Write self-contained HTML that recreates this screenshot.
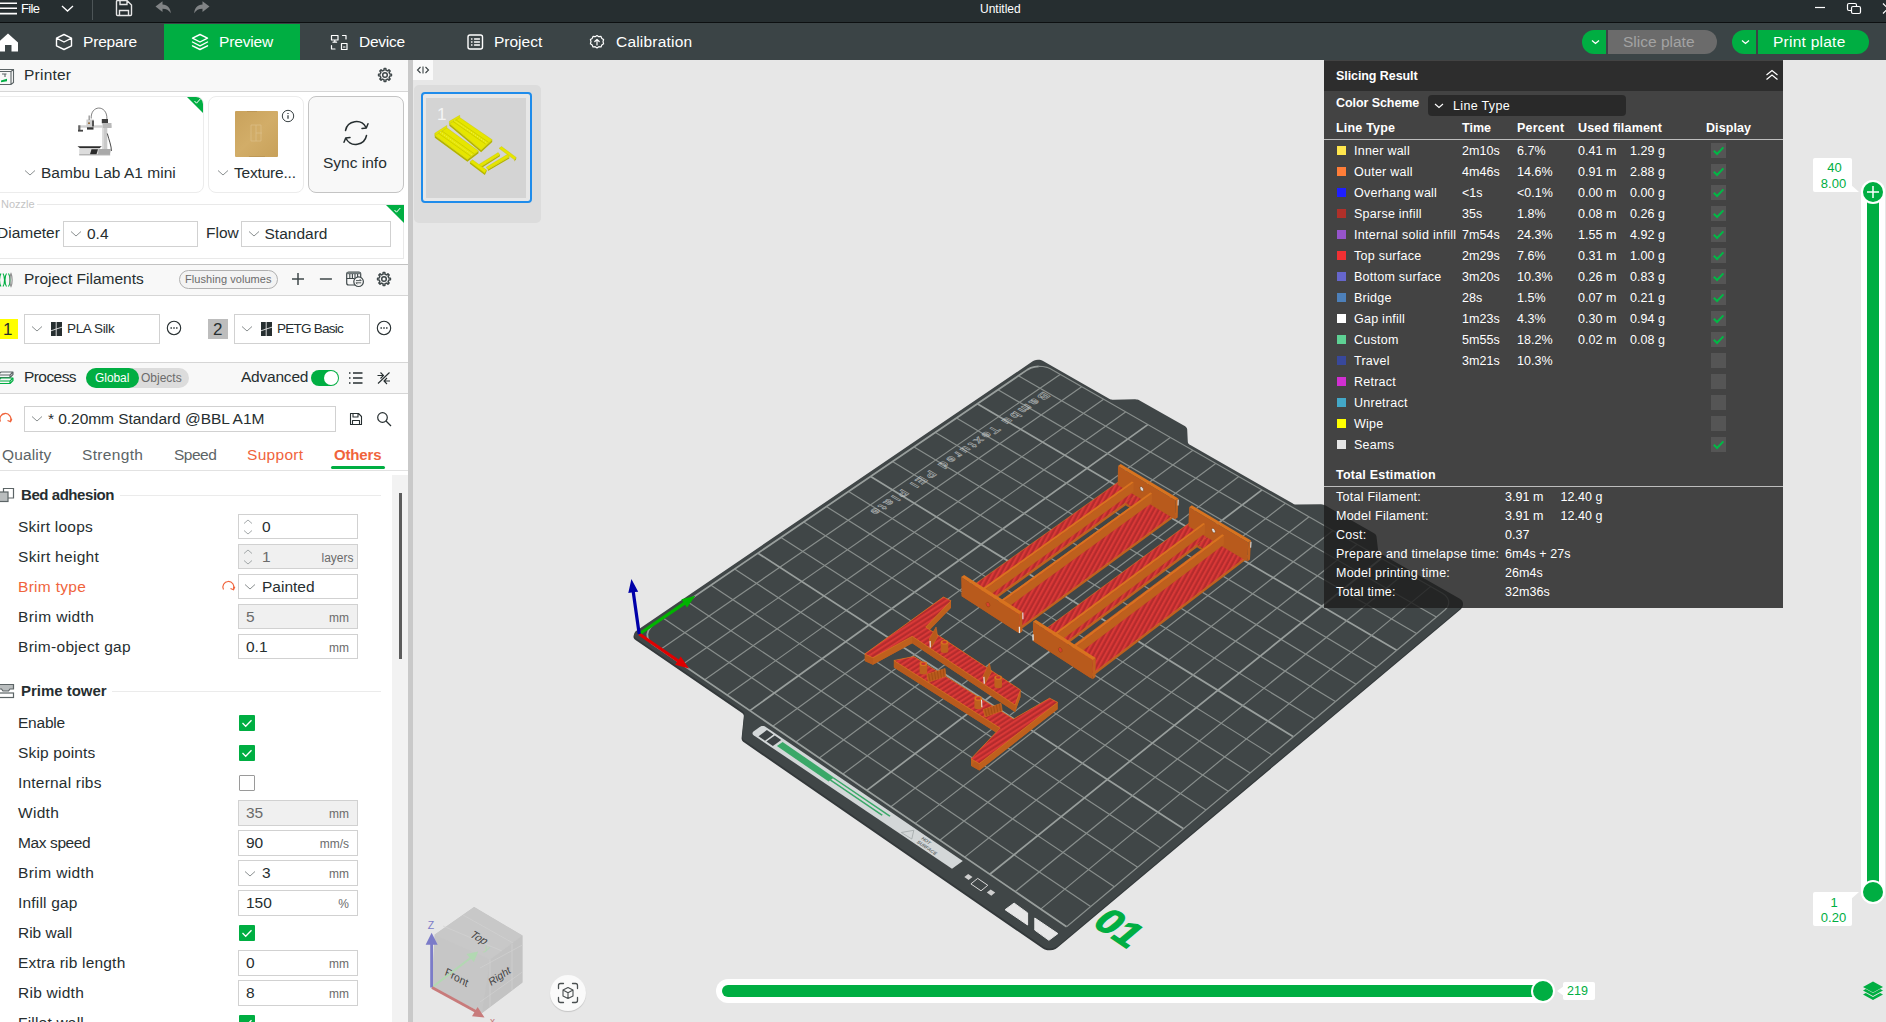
<!DOCTYPE html>
<html lang="en">
<head>
<meta charset="utf-8">
<title>Untitled</title>
<style>
*{box-sizing:border-box;margin:0;padding:0}
html,body{width:1886px;height:1022px;overflow:hidden;background:#e7e7e7;font-family:"Liberation Sans",sans-serif;color:#262e30}
.abs{position:absolute}
#app{position:relative;width:1886px;height:1022px;overflow:hidden}
.t{position:absolute;white-space:nowrap;line-height:1;transform-origin:0 50%}
#titlebar{position:absolute;left:0;top:0;width:1886px;height:24px;background:linear-gradient(to bottom,#262e30 0,#262e30 22.4px,#0d1011 22.4px,#0d1011 23.5px,#3b4446 23.5px)}
#tabbar{position:absolute;left:0;top:24px;width:1886px;height:36px;background:#3b4446}
#left{position:absolute;left:0;top:60px;width:408px;height:962px;background:#fff;overflow:hidden}
#divider{position:absolute;left:408px;top:60px;width:5px;height:962px;background:#c9c9c9}
.hdr{position:absolute;left:0;width:408px;background:#f8f8f8;border-top:1px solid #d6d6d6;border-bottom:1px solid #d6d6d6}
.box{position:absolute;border:1px solid #d1d1d1;background:#fff}
.box.dis{background:#f0f0f0}
.lbl{position:absolute;left:18px;font-size:15.5px;white-space:nowrap;line-height:20px;color:#262e30}
.val{position:absolute;font-size:15.5px;line-height:23px;color:#262e30;white-space:nowrap}
.unit{position:absolute;right:8px;top:0;font-size:12px;line-height:25px;color:#6b6b6b}
.cb{position:absolute;left:239px;width:16px;height:16px;background:#00ae42;border-radius:1px}
.cb.off{background:#fff;border:1px solid #9a9a9a}
svg{display:block}
</style>
</head>
<body>
<div id="app">
<div id="titlebar">
  <svg class="abs" style="left:0;top:0" width="240" height="22" viewBox="0 0 240 22">
    <g stroke="#fff" stroke-width="1.6" fill="none">
      <path d="M0 3.2H17M0 8.2H17M0 13.6H17"/>
      <path d="M62 6l5.5 5 5.500-5" stroke-width="1.3"/>
    </g>
    <path d="M92.500 0V20" stroke="#4d5557" stroke-width="1"/>
    <path d="M117.500 0.500H127l4.500 4.500V14.500a1 1 0 0 1-1 1H117.500a1 1 0 0 1-1-1V1.500a1 1 0 0 1 1-1zM120 0.500V4.500H127V0.500M119.500 15.500V10.500H128.500V15.500" stroke="#e6e6e6" stroke-width="1.4" fill="none"/>
    <path d="M155.500 6.500L162.500 1.200V4.600C167.500 5 170.500 8 170.800 13.300C168.800 10 166.500 8.800 162.500 8.800V12z" fill="#818486"/>
    <path d="M209.500 6.500L202.500 1.200V4.600C197.500 5 194.500 8 194.200 13.300C196.200 10 198.500 8.800 202.500 8.800V12z" fill="#818486"/>
  </svg>
  <div class="t" style="left:21px;top:2px;font-size:13px;color:#fff;letter-spacing:-0.69px">File</div>
  <div class="t" style="left:980px;top:2.500px;font-size:12px;color:#fff">Untitled</div>
  <svg class="abs" style="left:1800px;top:0" width="86" height="22" viewBox="0 0 86 22">
    <path d="M15 7.500H25" stroke="#fff" stroke-width="1.2"/>
    <rect x="47.500" y="3.500" width="9" height="7" rx="1.500" fill="none" stroke="#fff" stroke-width="1.200"/>
    <rect x="51.500" y="6.500" width="9" height="7" rx="1.500" fill="#262e30" stroke="#fff" stroke-width="1.200"/>
    <path d="M83 3.500l10 10M83 13.500l10-10" stroke="#fff" stroke-width="1.200"/>
  </svg>
</div>
<div id="tabbar">
  <div class="abs" style="left:164px;top:0;width:136px;height:36px;background:#00ae42"></div>
  <svg class="abs" style="left:0;top:0" width="720" height="36" viewBox="0 0 720 36" fill="none" stroke="#fff" stroke-width="1.4" stroke-linejoin="round" stroke-linecap="round">
    <path d="M-2 18.500L8 9.500L18 18.500V27.500H11.500V21H5V27.500H-2z" fill="#fff" stroke="none"/>
    <!-- prepare cube -->
    <path d="M64 10.500L71.500 14.200V21.800L64 25.500L56.500 21.800V14.200zM56.500 14.200L64 18L71.500 14.200"/>
    <!-- preview layers -->
    <path d="M200 10.500L207.500 14.200L200 18L192.500 14.200zM192.500 18L200 21.800L207.500 18M192.500 21.800L200 25.500L207.500 21.800"/>
    <!-- device -->
    <path d="M331.500 11.500h6.500v4.500h-6.500zM334.800 16v2M333 18.200h3.600M342.500 11.500h3.500v3.500M331.500 21.500v3.500H335M341.500 19.500h5.500v6h-5.500zM343.500 23h1.500" stroke-width="1.200"/>
    <!-- project -->
    <rect x="468" y="11" width="14.500" height="14" rx="2"/>
    <path d="M471.500 15h0.500M474.500 15h5M471.500 18h0.500M474.500 18h5M471.500 21h0.500M474.500 21h5" stroke-width="1.300"/>
    <!-- calibration -->
    <path d="M597 11.500l1.800 1.200l2.200-0.300l0.800 2l1.800 1.200l-0.600 2.100l0.600 2.100l-1.800 1.200l-0.800 2l-2.200-0.300l-1.800 1.200l-1.800-1.200l-2.200 0.300l-0.800-2l-1.800-1.200l0.600-2.100l-0.600-2.100l1.800-1.200l0.800-2l2.200 0.300z" stroke-width="1.2"/>
    <path d="M597 21v-5.500M594.800 17.500l2.200-2.200l2.200 2.200" stroke-width="1.2"/>
  </svg>
  <div class="t" style="left:83px;top:10px;font-size:15.500px;color:#fff;letter-spacing:-0.18px">Prepare</div>
  <div class="t" style="left:219px;top:10px;font-size:15.500px;color:#fff;letter-spacing:-0.15px">Preview</div>
  <div class="t" style="left:359px;top:10px;font-size:15.500px;color:#fff;letter-spacing:-0.27px">Device</div>
  <div class="t" style="left:494px;top:10px;font-size:15.500px;color:#fff">Project</div>
  <div class="t" style="left:616px;top:10px;font-size:15.500px;color:#fff;letter-spacing:0.20px">Calibration</div>
  <!-- slice / print buttons -->
  <div class="abs" style="left:1582px;top:6px;width:24px;height:24px;background:#00ae42;border-radius:12px 0 0 12px"></div>
  <div class="abs" style="left:1608px;top:6px;width:109px;height:24px;background:#6b6b6b;border-radius:0 12px 12px 0"></div>
  <div class="abs" style="left:1732px;top:6px;width:24px;height:24px;background:#00ae42;border-radius:12px 0 0 12px"></div>
  <div class="abs" style="left:1758px;top:6px;width:111px;height:24px;background:#00ae42;border-radius:0 12px 12px 0"></div>
  <svg class="abs" style="left:1582px;top:6px" width="180" height="24" viewBox="0 0 180 24" fill="none" stroke="#fff" stroke-width="1.3"><path d="M10 10.500l3.500 3l3.500-3M160 10.500l3.500 3l3.500-3"/></svg>
  <div class="t" style="left:1623px;top:10px;font-size:15.500px;color:#a3a3a3">Slice plate</div>
  <div class="t" style="left:1773px;top:10px;font-size:15.500px;color:#fff;letter-spacing:0.25px">Print plate</div>
</div>
<div id="left">
  <!-- Printer header -->
  <div class="hdr" style="top:0;height:32px;border-top:none"></div>
  <svg class="abs" style="left:0;top:6px" width="16" height="20" viewBox="0 0 16 20" fill="none" stroke="#5c6466" stroke-width="1.1">
    <path d="M-2 3.500H13.500V16.500L11 18.500H-2M11 5.500V18.500M13.500 3.500L11 5.500H-2M2 8H6.500M5 8v3"/>
    <path d="M1 14.500l6-1.800v2.500l-6 1z" fill="#00ae42" stroke="none"/>
  </svg>
  <div class="t" style="left:24px;top:6.500px;font-size:15.500px;letter-spacing:0.23px">Printer</div>
  <svg class="abs" style="left:375.500px;top:6px" width="18" height="18" viewBox="0 0 18 18" fill="none" stroke="#3f484a" stroke-width="1.500" stroke-linejoin="round">
    <path d="M13.80 8.00L15.44 8.14L15.44 9.86L13.80 10.00L13.10 11.68L14.16 12.95L12.95 14.16L11.68 13.10L10.00 13.80L9.86 15.44L8.14 15.44L8.00 13.80L6.32 13.10L5.05 14.16L3.84 12.95L4.90 11.68L4.20 10.00L2.56 9.86L2.56 8.14L4.20 8.00L4.90 6.32L3.84 5.05L5.05 3.84L6.32 4.90L8.00 4.20L8.14 2.56L9.86 2.56L10.00 4.20L11.68 4.90L12.95 3.84L14.16 5.05L13.10 6.32z"/><circle cx="9" cy="9" r="2.300"/>
  </svg>
  <!-- cards -->
  <div class="abs" style="left:-8px;top:36px;width:212px;height:97px;border:1px solid #ececec;border-radius:8px;background:#fff;overflow:hidden">
    <svg class="abs" style="right:-1px;top:-1px" width="18" height="18" viewBox="0 0 18 18"><path d="M0 0H18V18z" fill="#00ae42"/><path d="M8.500 5l2 2.200l3.800-4.200" stroke="#fff" stroke-width="1" fill="none"/></svg>
  </div>
  <!-- printer picture -->
  <svg class="abs" style="left:70px;top:40px" width="50" height="60" viewBox="70 100 50 60" fill="none">
    <path d="M91.200 118.500C90.500 104.500 107.500 104.500 106.900 119" stroke="#4a4a4a" stroke-width="0.700"/>
    <rect x="102.100" y="119.300" width="5.200" height="30.500" fill="#c9c9c9"/>
    <rect x="102.100" y="119.300" width="1.600" height="30.500" fill="#dedede"/>
    <rect x="101.800" y="119" width="6.200" height="4.200" fill="#3e3e3e"/>
    <rect x="78.500" y="125.300" width="33" height="2.400" fill="#d0d0d0"/>
    <rect x="103" y="123" width="8.500" height="5" fill="#b9b9b9"/>
    <rect x="86.400" y="119.500" width="7.500" height="8.500" fill="#cfcfcf"/>
    <rect x="88.500" y="115.500" width="1.400" height="4.500" fill="#9a9a9a"/>
    <rect x="92" y="120.500" width="2" height="6" fill="#555"/>
    <rect x="88" y="122.500" width="2" height="1.300" fill="#8a5a20"/>
    <rect x="87" y="127.300" width="6.500" height="2.300" fill="#333"/>
    <rect x="78.200" y="125.300" width="2.200" height="5" fill="#666"/>
    <rect x="78" y="129.800" width="5" height="1.800" fill="#444"/>
    <path d="M107.300 133.500C109 140 111.500 146 111.400 151" stroke="#333" stroke-width="0.900"/>
    <path d="M77.500 146.200H101.800L99.500 148.300H80z" fill="#2c2c2c"/>
    <rect x="79.200" y="148.700" width="19.500" height="6.200" fill="#dcdcdc"/>
    <path d="M91.500 149.300h6.500l-1.500 5h-6.500z" fill="#2a2a2a"/>
    <path d="M98.500 149h12.500l-1 5.500H98z" fill="#a9a9a9"/>
    <rect x="79.200" y="154.500" width="31" height="0.800" fill="#8a8a8a"/>
  </svg>
  <svg class="abs" style="left:24px;top:109px" width="12" height="8" viewBox="0 0 12 8" fill="none" stroke="#8a8f90" stroke-width="1"><path d="M1 1.500l5 4.500l5-4.500"/></svg>
  <div class="t" style="left:41px;top:105px;font-size:15.500px;letter-spacing:0.02px">Bambu Lab A1 mini</div>

  <div class="abs" style="left:208px;top:36px;width:96px;height:97px;border:1px solid #ececec;border-radius:8px;background:#fff"></div>
  <div class="abs" style="left:235px;top:51px;width:43px;height:46px;background:linear-gradient(135deg,#c9a25c,#d2ad68 50%,#c8a15a);border-radius:1px"></div>
  <svg class="abs" style="left:235px;top:51px" width="43" height="46" viewBox="0 0 43 46" fill="none" stroke="#dcc089" stroke-width="0.700"><path d="M16 14h10v16H16zM21 14v16M21 22h6"/><path d="M12 0h10M14 46h16" stroke="#b89252" stroke-width="1.500"/></svg>
  <svg class="abs" style="left:281px;top:49px" width="14" height="14" viewBox="0 0 14 14" fill="none" stroke="#3a4244" stroke-width="1"><circle cx="7" cy="7" r="5.700"/><path d="M7 6.200v3.600M7 4v1" stroke-width="1.300"/></svg>
  <svg class="abs" style="left:217px;top:109px" width="12" height="8" viewBox="0 0 12 8" fill="none" stroke="#8a8f90" stroke-width="1"><path d="M1 1.500l5 4.500l5-4.500"/></svg>
  <div class="t" style="left:234px;top:105px;font-size:15.500px;letter-spacing:-0.20px">Texture...</div>

  <div class="abs" style="left:308px;top:36px;width:96px;height:97px;border:1px solid #c4c4c4;border-radius:8px;background:#f8f8f8"></div>
  <svg class="abs" style="left:339px;top:56px" width="34" height="34" viewBox="0 0 34 34" fill="none" stroke="#262e30" stroke-width="1.500" stroke-linecap="round" stroke-linejoin="round">
    <path d="M6.500 14.500A11 11 0 0 1 27 11.500M27.500 19.500A11 11 0 0 1 7 22.500"/>
    <path d="M23 12.500l4.300-0.500l1.700-4.200M11 21.500l-4.300 0.500l-1.700 4.200"/>
  </svg>
  <div class="t" style="left:323px;top:95px;font-size:15.500px">Sync info</div>

  <!-- nozzle -->
  <div class="abs" style="left:37px;top:144px;width:367px;height:1px;background:#e9e9e9"></div>
  <div class="abs" style="left:403px;top:144px;width:1px;height:54px;background:#e9e9e9"></div>
  <div class="abs" style="left:0;top:198px;width:404px;height:1px;background:#e9e9e9"></div>
  <div class="t" style="left:1px;top:138.500px;font-size:11px;color:#c4c4c4">Nozzle</div>
  <svg class="abs" style="left:386px;top:145px" width="18" height="18" viewBox="0 0 18 18"><path d="M0 0H18V18z" fill="#00ae42"/><path d="M8.500 5l2 2.200l3.800-4.200" stroke="#fff" stroke-width="1" fill="none"/></svg>
  <div class="t" style="left:-3px;top:165px;font-size:15.500px">Diameter</div>
  <div class="box" style="left:63px;top:161px;width:135px;height:26px"></div>
  <svg class="abs" style="left:70px;top:170px" width="12" height="8" viewBox="0 0 12 8" fill="none" stroke="#8a8f90" stroke-width="1"><path d="M1 1.500l5 4.500l5-4.500"/></svg>
  <div class="t" style="left:87px;top:166px;font-size:15.500px">0.4</div>
  <div class="t" style="left:206px;top:165px;font-size:15.500px">Flow</div>
  <div class="box" style="left:241px;top:161px;width:150px;height:26px"></div>
  <svg class="abs" style="left:248px;top:170px" width="12" height="8" viewBox="0 0 12 8" fill="none" stroke="#8a8f90" stroke-width="1"><path d="M1 1.500l5 4.500l5-4.500"/></svg>
  <div class="t" style="left:264.500px;top:166px;font-size:15.500px">Standard</div>
  <!-- Project Filaments header -->
  <div class="hdr" style="top:204px;height:32px;border-top-color:#c2c2c2"></div>
  <svg class="abs" style="left:0;top:212px" width="14" height="16" viewBox="0 0 14 16" fill="none" stroke="#00ae42" stroke-width="1.100">
    <path d="M1 1.500c-2 3-2 10 0 13M3 1.500c2 3 2 10 0 13M6.500 1.500c-2 3-2 10 0 13M8.500 1.500c2 3 2 10 0 13" />
    <path d="M11 1.500c-1.500 3-1.500 10 0 13c1.500-3 1.500-10 0-13z" stroke="#8a8a8a"/>
  </svg>
  <div class="t" style="left:24px;top:210.500px;font-size:15.500px">Project Filaments</div>
  <div class="abs" style="left:179px;top:210px;width:99px;height:19px;border:1px solid #b0b0b0;border-radius:9.500px;background:#f3f3f3"></div>
  <div class="t" style="left:185px;top:214px;font-size:11px;color:#6b6b6b;letter-spacing:0.06px">Flushing volumes</div>
  <svg class="abs" style="left:288px;top:209px" width="110" height="22" viewBox="0 0 110 22" fill="none" stroke="#3f484a" stroke-width="1.400" stroke-linejoin="round">
    <path d="M4 9.900H16M10 3.900V15.900M31.900 9.900H43.900" stroke-width="1.500"/>
    <rect x="58.700" y="3" width="14" height="13" rx="2" stroke-width="1.200"/>
    <path d="M58.700 4.200H72.700" stroke-width="2" stroke="#6d7577"/>
    <path d="M61.800 5v4M64.400 5v4M67 5v4M69.600 5v4M58.700 9.500H72.700" stroke-width="1.100"/>
    <circle cx="70.600" cy="12.700" r="4.800" fill="#f8f8f8" stroke-width="1.200"/>
    <path d="M68 11.600h5.200l-1.500-1.500M73.200 13.800h-5.200l1.500 1.500" stroke-width="0.900"/>
    <path d="M100.80 9.00L102.44 9.14L102.44 10.86L100.80 11.00L100.10 12.68L101.16 13.95L99.95 15.16L98.68 14.10L97.00 14.80L96.86 16.44L95.14 16.44L95.00 14.80L93.32 14.10L92.05 15.16L90.84 13.95L91.90 12.68L91.20 11.00L89.56 10.86L89.56 9.14L91.20 9.00L91.90 7.32L90.84 6.05L92.05 4.84L93.32 5.90L95.00 5.20L95.14 3.56L96.86 3.56L97.00 5.20L98.68 5.90L99.95 4.84L101.16 6.05L100.10 7.32z" stroke-width="1.500"/><circle cx="96" cy="10" r="2.300" stroke-width="1.500"/>
  </svg>
  <!-- filaments -->
  <div class="abs" style="left:-2px;top:259px;width:20px;height:20px;background:#ffff00"></div>
  <div class="t" style="left:3px;top:260.500px;font-size:17px">1</div>
  <div class="box" style="left:24px;top:254px;width:136px;height:30px"></div>
  <svg class="abs" style="left:31px;top:265px" width="12" height="8" viewBox="0 0 12 8" fill="none" stroke="#8a8f90" stroke-width="1"><path d="M1 1.500l5 4.500l5-4.500"/></svg>
  <svg class="abs" style="left:51px;top:262px" width="11" height="14" viewBox="0 0 11 14"><rect x="0" y="0" width="11" height="14" fill="#262e30"/><path d="M5.200 0V14M0 8.800L5.200 7L11 5.200" stroke="#fff" stroke-width="0.800" fill="none"/></svg>
  <div class="t" style="left:67px;top:262px;font-size:13.500px;letter-spacing:-0.36px">PLA Silk</div>
  <svg class="abs" style="left:166px;top:260px" width="16" height="16" viewBox="0 0 16 16" fill="none" stroke="#262e30" stroke-width="1.100"><circle cx="8" cy="8" r="6.700"/><path d="M4.500 8h1.400M7.300 8h1.400M10.100 8h1.400" stroke-width="1.500"/></svg>
  <div class="abs" style="left:208px;top:259px;width:20px;height:20px;background:#bdbdbd"></div>
  <div class="t" style="left:213px;top:260.500px;font-size:17px">2</div>
  <div class="box" style="left:234px;top:254px;width:136px;height:30px"></div>
  <svg class="abs" style="left:241px;top:265px" width="12" height="8" viewBox="0 0 12 8" fill="none" stroke="#8a8f90" stroke-width="1"><path d="M1 1.500l5 4.500l5-4.500"/></svg>
  <svg class="abs" style="left:261px;top:262px" width="11" height="14" viewBox="0 0 11 14"><rect x="0" y="0" width="11" height="14" fill="#262e30"/><path d="M5.200 0V14M0 8.800L5.200 7L11 5.200" stroke="#fff" stroke-width="0.800" fill="none"/></svg>
  <div class="t" style="left:277px;top:262px;font-size:13.500px;letter-spacing:-0.75px">PETG Basic</div>
  <svg class="abs" style="left:376px;top:260px" width="16" height="16" viewBox="0 0 16 16" fill="none" stroke="#262e30" stroke-width="1.100"><circle cx="8" cy="8" r="6.700"/><path d="M4.500 8h1.400M7.300 8h1.400M10.100 8h1.400" stroke-width="1.500"/></svg>

  <!-- Process header -->
  <div class="hdr" style="top:302px;height:32px"></div>
  <svg class="abs" style="left:0;top:310px" width="16" height="16" viewBox="0 0 16 16" fill="none" stroke="#5c6466" stroke-width="1.100" stroke-linejoin="round">
    <path d="M-2 5l3-3h12l-3 3zM-2 5v2.500h12V5M13 2v2.500l-3 3"/>
    <path d="M-2 11l3-3h12l-3 3zM-2 11v2.500h12V11M13 8v2.500l-3 3" stroke="#00ae42"/>
  </svg>
  <div class="t" style="left:24px;top:308.500px;font-size:15.500px;letter-spacing:-0.57px">Process</div>
  <div class="abs" style="left:86px;top:308px;width:103px;height:20px;border-radius:10px;background:#dcdcdc"></div>
  <div class="abs" style="left:86px;top:308px;width:53px;height:20px;border-radius:10px;background:#00ae42"></div>
  <div class="t" style="left:95px;top:312px;font-size:12px;color:#fff;letter-spacing:-0.06px">Global</div>
  <div class="t" style="left:141px;top:312px;font-size:12px;color:#6b6b6b">Objects</div>
  <div class="t" style="left:241px;top:309px;font-size:15.500px;letter-spacing:-0.22px">Advanced</div>
  <div class="abs" style="left:311px;top:310px;width:28px;height:16px;border-radius:8px;background:#00ae42"></div>
  <div class="abs" style="left:323.500px;top:311px;width:14px;height:14px;border-radius:7px;background:#fff"></div>
  <svg class="abs" style="left:346px;top:308px" width="50" height="20" viewBox="0 0 50 20" fill="none" stroke="#262e30" stroke-width="1.300">
    <path d="M3 5h1.500M3 10h1.500M3 15h1.500M7 5h9.500M7 10h9.500M7 15h9.500"/>
    <path d="M32 15.500L43.500 4.500M31.500 7.500h6M34.500 4.500l3 3l-3 3M44 13h-6M41 10l-3 3l3 3" stroke-width="1.100"/>
  </svg>
  <!-- preset row -->
  <svg class="abs" style="left:-4px;top:350px" width="18" height="18" viewBox="0 0 18 18" fill="none" stroke="#f0643c" stroke-width="1.300"><path d="M4.500 11.500A5.500 5.500 0 1 1 14.500 11"/><path d="M11.500 10.500l3 1.200l1.300-3" /></svg>
  <div class="box" style="left:24px;top:346px;width:312px;height:26px"></div>
  <svg class="abs" style="left:31px;top:355px" width="12" height="8" viewBox="0 0 12 8" fill="none" stroke="#8a8f90" stroke-width="1"><path d="M1 1.500l5 4.500l5-4.500"/></svg>
  <div class="t" style="left:48px;top:351px;font-size:15.500px;letter-spacing:-0.05px">* 0.20mm Standard @BBL A1M</div>
  <svg class="abs" style="left:348px;top:351px" width="16" height="16" viewBox="0 0 16 16" fill="none" stroke="#262e30" stroke-width="1.100" stroke-linejoin="round"><path d="M2.500 2.500H10.500l3 3V13.500H2.500zM5 2.500V6H10V2.500M4.500 13.500V9.500H11.500V13.500"/></svg>
  <svg class="abs" style="left:375px;top:350px" width="18" height="18" viewBox="0 0 18 18" fill="none" stroke="#262e30" stroke-width="1.200"><circle cx="7.500" cy="7.500" r="4.800"/><path d="M11 11l5 5"/></svg>
  <!-- tabs -->
  <div class="t" style="left:2px;top:387px;font-size:15.500px;color:#5c6466;letter-spacing:0.15px">Quality</div>
  <div class="t" style="left:82px;top:387px;font-size:15.500px;color:#5c6466;letter-spacing:0.34px">Strength</div>
  <div class="t" style="left:174px;top:387px;font-size:15.500px;color:#5c6466;letter-spacing:-0.49px">Speed</div>
  <div class="t" style="left:247px;top:387px;font-size:15.500px;color:#f0643c;letter-spacing:0.31px">Support</div>
  <div class="t" style="left:334px;top:387px;font-size:15px;color:#f0643c;font-weight:bold;letter-spacing:-0.16px">Others</div>
  <div class="abs" style="left:331px;top:405.500px;width:54px;height:3px;border-radius:1.500px;background:#00ae42"></div>
  <div class="abs" style="left:0;top:410px;width:408px;height:1px;background:#e2e2e2"></div>
  <!-- scroll -->
  <div class="abs" style="left:392px;top:415px;width:16px;height:547px;background:#f2f2f2"></div>
  <div class="abs" style="left:398.500px;top:433px;width:3.500px;height:166px;background:#5c5c5c"></div>
<div class="t" style="left:21px;top:426.7px;font-size:15px;font-weight:bold;letter-spacing:-0.44px">Bed adhesion</div>
<div class="abs" style="left:120px;top:434.7px;width:261px;height:1px;background:#ebebeb"></div>
<svg class="abs" style="left:0;top:426.7px" width="16" height="16" viewBox="0 0 16 16" fill="none" stroke="#5c6466" stroke-width="1.200"><rect x="-2" y="5" width="10" height="9.500" fill="#b9bdbe"/><path d="M3.500 5V1.500H13.500V11H8"/></svg>
<div class="t" style="left:18px;top:458.70000000000005px;font-size:15.500px;color:#262e30;letter-spacing:0.25px">Skirt loops</div>
<div class="box" style="left:238px;top:453.70000000000005px;width:120px;height:25.500px"></div>
<svg class="abs" style="left:243px;top:457.70000000000005px" width="10" height="18" viewBox="0 0 10 18" fill="none" stroke="#9a9fa0" stroke-width="0.900"><path d="M1 5.500l4-3.500l4 3.500M1 12.500l4 3.500l4-3.500"/></svg>
<div class="t" style="left:262px;top:458.70000000000005px;font-size:15.500px;color:#262e30">0</div>
<div class="t" style="left:18px;top:488.70000000000005px;font-size:15.500px;color:#262e30;letter-spacing:0.30px">Skirt height</div>
<div class="box dis" style="left:238px;top:483.70000000000005px;width:120px;height:25.500px"></div>
<svg class="abs" style="left:243px;top:487.70000000000005px" width="10" height="18" viewBox="0 0 10 18" fill="none" stroke="#9a9fa0" stroke-width="0.900"><path d="M1 5.500l4-3.500l4 3.500M1 12.500l4 3.500l4-3.500"/></svg>
<div class="t" style="left:262px;top:488.70000000000005px;font-size:15.500px;color:#6b6b6b">1</div>
<div class="t" style="right:54.5px;top:491.70000000000005px;font-size:12px;color:#6b6b6b;transform-origin:100% 50%">layers</div>
<div class="t" style="left:18px;top:518.7px;font-size:15.500px;color:#f0643c;letter-spacing:0.30px">Brim type</div>
<div class="box" style="left:238px;top:513.7px;width:120px;height:25.500px"></div>
<svg class="abs" style="left:244px;top:523.2px" width="12" height="8" viewBox="0 0 12 8" fill="none" stroke="#8a8f90" stroke-width="1"><path d="M1 1.500l5 4.500l5-4.500"/></svg>
<div class="t" style="left:262px;top:518.7px;font-size:15.500px;color:#262e30">Painted</div>
<svg class="abs" style="left:219px;top:518px" width="18" height="18" viewBox="0 0 18 18" fill="none" stroke="#f0643c" stroke-width="1.200"><path d="M4.500 11.500A5.500 5.500 0 1 1 14.500 11"/><path d="M11.500 10.500l3 1.200l1.300-3"/></svg>
<div class="t" style="left:18px;top:548.7px;font-size:15.500px;color:#262e30;letter-spacing:0.40px">Brim width</div>
<div class="box dis" style="left:238px;top:543.7px;width:120px;height:25.500px"></div>
<div class="t" style="left:246px;top:548.7px;font-size:15.500px;color:#6b6b6b">5</div>
<div class="t" style="right:59px;top:551.7px;font-size:12px;color:#6b6b6b;transform-origin:100% 50%">mm</div>
<div class="t" style="left:18px;top:578.7px;font-size:15.500px;color:#262e30;letter-spacing:0.29px">Brim-object gap</div>
<div class="box" style="left:238px;top:573.7px;width:120px;height:25.500px"></div>
<div class="t" style="left:246px;top:578.7px;font-size:15.500px;color:#262e30">0.1</div>
<div class="t" style="right:59px;top:581.7px;font-size:12px;color:#6b6b6b;transform-origin:100% 50%">mm</div>
<div class="t" style="left:21px;top:622.8px;font-size:15px;font-weight:bold;letter-spacing:-0.03px">Prime tower</div>
<div class="abs" style="left:112px;top:630.8px;width:269px;height:1px;background:#ebebeb"></div>
<svg class="abs" style="left:0;top:622.8px" width="16" height="16" viewBox="0 0 16 16" fill="none" stroke="#5c6466" stroke-width="1.200"><path d="M-2 1.500H13.500V6H10L8.500 8H3L1.500 6H-2" fill="#b9bdbe"/><rect x="-2" y="10" width="15.500" height="4.500"/></svg>
<div class="t" style="left:18px;top:655px;font-size:15.500px;color:#262e30;letter-spacing:-0.23px">Enable</div>
<div class="cb" style="top:655px"><svg width="16" height="16" viewBox="0 0 16 16" fill="none" stroke="#fff" stroke-width="1.300"><path d="M3.500 8l3.200 3.200l5.800-6"/></svg></div>
<div class="t" style="left:18px;top:685px;font-size:15.500px;color:#262e30;letter-spacing:0.15px">Skip points</div>
<div class="cb" style="top:685px"><svg width="16" height="16" viewBox="0 0 16 16" fill="none" stroke="#fff" stroke-width="1.300"><path d="M3.500 8l3.200 3.200l5.800-6"/></svg></div>
<div class="t" style="left:18px;top:715px;font-size:15.500px;color:#262e30;letter-spacing:0.20px">Internal ribs</div>
<div class="cb off" style="top:715px"></div>
<div class="t" style="left:18px;top:745px;font-size:15.500px;color:#262e30;letter-spacing:0.30px">Width</div>
<div class="box dis" style="left:238px;top:740px;width:120px;height:25.500px"></div>
<div class="t" style="left:246px;top:745px;font-size:15.500px;color:#6b6b6b">35</div>
<div class="t" style="right:59px;top:748px;font-size:12px;color:#6b6b6b;transform-origin:100% 50%">mm</div>
<div class="t" style="left:18px;top:775px;font-size:15.500px;color:#262e30;letter-spacing:-0.39px">Max speed</div>
<div class="box" style="left:238px;top:770px;width:120px;height:25.500px"></div>
<div class="t" style="left:246px;top:775px;font-size:15.500px;color:#262e30">90</div>
<div class="t" style="right:59px;top:778px;font-size:12px;color:#6b6b6b;transform-origin:100% 50%">mm/s</div>
<div class="t" style="left:18px;top:805px;font-size:15.500px;color:#262e30;letter-spacing:0.40px">Brim width</div>
<div class="box" style="left:238px;top:800px;width:120px;height:25.500px"></div>
<svg class="abs" style="left:244px;top:809.5px" width="12" height="8" viewBox="0 0 12 8" fill="none" stroke="#8a8f90" stroke-width="1"><path d="M1 1.500l5 4.500l5-4.500"/></svg>
<div class="t" style="left:262px;top:805px;font-size:15.500px;color:#262e30">3</div>
<div class="t" style="right:59px;top:808px;font-size:12px;color:#6b6b6b;transform-origin:100% 50%">mm</div>
<div class="t" style="left:18px;top:835px;font-size:15.500px;color:#262e30;letter-spacing:0.19px">Infill gap</div>
<div class="box" style="left:238px;top:830px;width:120px;height:25.500px"></div>
<div class="t" style="left:246px;top:835px;font-size:15.500px;color:#262e30">150</div>
<div class="t" style="right:59px;top:838px;font-size:12px;color:#6b6b6b;transform-origin:100% 50%">%</div>
<div class="t" style="left:18px;top:865px;font-size:15.500px;color:#262e30;letter-spacing:-0.02px">Rib wall</div>
<div class="cb" style="top:865px"><svg width="16" height="16" viewBox="0 0 16 16" fill="none" stroke="#fff" stroke-width="1.300"><path d="M3.500 8l3.200 3.200l5.800-6"/></svg></div>
<div class="t" style="left:18px;top:895px;font-size:15.500px;color:#262e30;letter-spacing:0.20px">Extra rib length</div>
<div class="box" style="left:238px;top:890px;width:120px;height:25.500px"></div>
<div class="t" style="left:246px;top:895px;font-size:15.500px;color:#262e30">0</div>
<div class="t" style="right:59px;top:898px;font-size:12px;color:#6b6b6b;transform-origin:100% 50%">mm</div>
<div class="t" style="left:18px;top:925px;font-size:15.500px;color:#262e30;letter-spacing:0.25px">Rib width</div>
<div class="box" style="left:238px;top:920px;width:120px;height:25.500px"></div>
<div class="t" style="left:246px;top:925px;font-size:15.500px;color:#262e30">8</div>
<div class="t" style="right:59px;top:928px;font-size:12px;color:#6b6b6b;transform-origin:100% 50%">mm</div>
<div class="t" style="left:18px;top:955px;font-size:15.500px;color:#262e30;letter-spacing:0.20px">Fillet wall</div>
<div class="cb" style="top:955px"><svg width="16" height="16" viewBox="0 0 16 16" fill="none" stroke="#fff" stroke-width="1.300"><path d="M3.500 8l3.200 3.200l5.800-6"/></svg></div>
</div>
<div id="divider"></div>
<!-- canvas widgets -->
<div class="abs" style="left:413px;top:60px;width:20px;height:20px;background:#fafafa"></div>
<svg class="abs" style="left:413px;top:60px" width="20" height="20" viewBox="0 0 20 20" fill="none" stroke="#3a4244" stroke-width="1.1"><path d="M7.500 7l-3 3l3 3M12.500 7l3 3l-3 3M10 6.500v7" /></svg>
<div class="abs" style="left:413.500px;top:85px;width:127.500px;height:138px;background:#dcdcdc;border-radius:5px"></div>
<div class="abs" style="left:420.500px;top:92px;width:111px;height:111px;border:2px solid #1f8ceb;border-radius:4px;background:#e7e7e7"></div>
<div class="abs" style="left:426px;top:98px;width:100px;height:100px;background:#d4d4d4"></div>
<div class="t" style="left:437px;top:106px;font-size:17px;color:#f4f4f4">1</div>
<svg class="abs" style="left:426px;top:98px" width="100" height="100" viewBox="0 0 100 100">
  <g fill="#b4b400"><path d="M23.400 25.500v2.300L55.100 54.300L66.200 44.100v-2.300L55.100 52zM8.800 37.500v2.300L41.400 63.800L52.500 55.200v-2.300L41.400 61.500zM43.900 64v1.800L58.800 77l1.700-3.200v-1.800zM55.100 68.600v1.600L73.900 58.300v-1.600zM88.500 61.800v1.600l1.700-2.400v-1.600zM61.900 71.400v1.500L83.300 60.400v-1.500z"/></g>
  <g fill="#e6e600" stroke="#c4c400" stroke-width="0.400" stroke-linejoin="round">
    <path d="M23.400 25.500L33.700 19.500L66.200 41.800L55.100 52z"/>
    <path d="M8.800 37.500L20.800 29.800L52.500 52.900L41.400 61.500z"/>
    <path d="M23.400 25.500L33.700 19.500L33.700 17.300L23.400 23.300zM8.800 37.500L20.800 29.800L20.800 27.500L8.800 35.200z"/>
    <path d="M43.900 64L46.500 61.800L60.500 72L58.800 75.200z"/>
    <path d="M53.300 66.200L72.200 54.600L73.900 56.700L55.100 68.600z"/>
    <path d="M73 50.300L75.600 48.600L90.200 59.400L88.500 61.800z"/>
    <path d="M81.600 56.300L83.300 58.900L61.900 71.400L60.200 69.200z"/>
  </g>
  <g stroke="#c0c000" stroke-width="0.600" fill="none">
    <path d="M27 23.500L59.500 46M30 21.800L62.500 44.300M12.500 35.300L45 58.500M16 33L48.500 56"/>
  </g>
  <g stroke="#f4f4c0" stroke-width="0.500" fill="none" stroke-dasharray="1 1.500">
    <path d="M28.500 22.700L61 45.200M14.200 34.200L46.700 57.300"/>
  </g>
</svg>
<!-- view cube -->
<svg class="abs" style="left:413px;top:895px" width="130" height="127" viewBox="413 895 130 127">
  <path d="M474.100 907.100L522.400 935.400L522.400 982.600L482 1013L431.600 987L434.500 934.800z" fill="#c6c6c6"/>
  <path d="M490 959.600L522.400 935.400L522.400 982.600L482 1013z" fill="#c3c3c3"/>
  <path d="M474.100 907.100L522.400 935.400L490 959.600L434.500 934.800z" fill="#c8c8c8"/>
  <g stroke="#d4d4d4" stroke-width="0.600" fill="none"><path d="M443 926L502 951M463 915L513 943M490 959.600L490 1007M512 944L512 990M480 968L522.400 945M480 1002L522.400 972"/></g>
  <g font-family="Liberation Sans, sans-serif" fill="#444" font-size="11" text-anchor="middle">
    <text transform="translate(476.400,940.500) rotate(30) skewX(-18)">Top</text>
    <text transform="translate(455.500,981) rotate(29) skewX(10)">Front</text>
    <text transform="translate(501,979.500) rotate(-34) skewX(-12)" font-size="10.500">Right</text>
  </g>
  <path d="M432.500 987L470.500 958" stroke="#b2d8b2" stroke-width="2.200"/><path d="M466.400 954L478.200 951.600L473.900 962.100z" fill="#b2d8b2"/>
  <text font-family="Liberation Sans, sans-serif" font-size="10" fill="#b2d8b2" transform="translate(483.500,950) rotate(25)">y</text>
  <path d="M431.600 987.500L431.600 944" stroke="#7b7bc8" stroke-width="2.800"/><path d="M425.600 944.800h12l-6-12z" fill="#7b7bc8"/>
  <text x="427.800" y="928.500" font-family="Liberation Sans, sans-serif" font-size="10.500" fill="#7b7bc8">Z</text>
  <path d="M432 987.500L476 1011.500" stroke="#c87b7b" stroke-width="2.800"/><path d="M477.600 1006.900L484.500 1017.400L472 1016.200z" fill="#c87b7b"/>
  <text x="490" y="1025" font-family="Liberation Sans, sans-serif" font-size="10" fill="#c87b7b">x</text>
</svg>
<div class="abs" style="left:550px;top:975px;width:36px;height:36px;border-radius:18px;background:#fafafa;box-shadow:0 1px 1px rgba(0,0,0,0.15)"></div>
<svg class="abs" style="left:550px;top:975px" width="36" height="36" viewBox="0 0 36 36" fill="none" stroke="#4a4f50" stroke-width="1.300" stroke-linejoin="round" stroke-linecap="round">
  <path d="M8.500 13.500v-3a2 2 0 0 1 2-2h3M22.500 8.500h3a2 2 0 0 1 2 2v3M27.500 22.500v3a2 2 0 0 1-2 2h-3M13.500 27.500h-3a2 2 0 0 1-2-2v-3"/>
  <path d="M18 12.500l5 2.600v5.800l-5 2.600l-5-2.600v-5.800zM13 15.100l5 2.700l5-2.700M18 17.800v5.700" stroke-width="1.100"/>
</svg>
<!-- horizontal slider -->
<div class="abs" style="left:716px;top:979px;width:839px;height:24px;border-radius:12px;background:#fff"></div>
<div class="abs" style="left:722px;top:985px;width:822px;height:12px;border-radius:6px;background:#00ae42"></div>
<div class="abs" style="left:1531px;top:979.500px;width:23px;height:23px;border-radius:12px;background:#fff"></div>
<div class="abs" style="left:1532.500px;top:981px;width:20px;height:20px;border-radius:10px;background:#00ae42"></div>
<div class="abs" style="left:1562.500px;top:981.500px;width:32px;height:18.500px;border-radius:2px;background:#fff"></div>
<svg class="abs" style="left:1556px;top:986px" width="8" height="10" viewBox="0 0 8 10"><path d="M8 0L1 5L8 10z" fill="#fff"/></svg>
<div class="t" style="left:1567px;top:984.500px;font-size:12.500px;color:#00ae42;letter-spacing:0.04px">219</div>
<!-- vertical slider -->
<div class="abs" style="left:1861px;top:180px;width:24px;height:724px;border-radius:12px;background:#fff"></div>
<div class="abs" style="left:1867px;top:192px;width:12px;height:700px;background:#00ae42"></div>
<div class="abs" style="left:1861px;top:180px;width:24px;height:24px;border-radius:12px;background:#fff"></div>
<div class="abs" style="left:1863px;top:182px;width:20px;height:20px;border-radius:10px;background:#00ae42"></div>
<svg class="abs" style="left:1863px;top:182px" width="20" height="20" viewBox="0 0 20 20" stroke="#fff" stroke-width="1.500"><path d="M4 10h12M10 4v12"/></svg>
<div class="abs" style="left:1861px;top:880px;width:24px;height:24px;border-radius:12px;background:#fff"></div>
<div class="abs" style="left:1863px;top:881.500px;width:20px;height:20px;border-radius:10px;background:#00ae42"></div>
<div class="abs" style="left:1813px;top:158px;width:39px;height:34px;border-radius:2px;background:#fff"></div>
<svg class="abs" style="left:1850px;top:184px" width="12" height="9" viewBox="0 0 12 9"><path d="M0 0L9 8L0 8z" fill="#fff"/></svg>
<div class="t" style="left:1815px;top:160.500px;width:39px;text-align:center;font-size:13px;color:#00ae42">40</div>
<div class="t" style="left:1814px;top:176.500px;width:39px;text-align:center;font-size:13px;color:#00ae42">8.00</div>
<div class="abs" style="left:1813px;top:892px;width:39px;height:34px;border-radius:2px;background:#fff"></div>
<svg class="abs" style="left:1850px;top:891px" width="12" height="9" viewBox="0 0 12 9"><path d="M0 1L9 1L0 9z" fill="#fff"/></svg>
<div class="t" style="left:1814.500px;top:895.500px;width:39px;text-align:center;font-size:13px;color:#00ae42">1</div>
<div class="t" style="left:1814px;top:910.500px;width:39px;text-align:center;font-size:13px;color:#00ae42">0.20</div>
<svg class="abs" style="left:1862px;top:980px" width="22" height="22" viewBox="0 0 22 22" fill="#00ae42"><path d="M11 1.500L21 7L11 12.500L1 7z"/><path d="M1 10.500L3.800 9L11 13L18.200 9L21 10.500L11 16z"/><path d="M1 14.500L3.800 13L11 17L18.200 13L21 14.500L11 20z"/></svg>
<svg class="abs" style="left:413px;top:60px" width="1473" height="962" viewBox="413 60 1473 962">
<defs>
<linearGradient id="gA" x1="0" y1="0" x2="0" y2="1"><stop offset="0" stop-color="#b02a2c"/><stop offset="0.3" stop-color="#b62c2d"/><stop offset="0.55" stop-color="#e03c3a"/><stop offset="0.8" stop-color="#d63634"/><stop offset="1" stop-color="#b02a2c"/></linearGradient><pattern id="hA" width="4.3" height="4.3" patternUnits="userSpaceOnUse" patternTransform="rotate(-61)"><rect width="4.3" height="4.3" fill="url(#gA)"/></pattern>
<pattern id="hB" width="4.2" height="4.2" patternUnits="userSpaceOnUse" patternTransform="rotate(-33)"><rect width="4.2" height="4.2" fill="url(#gA)"/></pattern>
<pattern id="hO" width="2" height="2" patternUnits="userSpaceOnUse" patternTransform="rotate(40)"><rect width="2" height="2" fill="#c9641d"/><rect width="2" height="0.7" fill="#bd5a18"/></pattern>
</defs>
<polygon points="635.5,640.1 634.3,639 633.6,637.7 633.5,636.2 633.9,634.8 634.8,633.4 636.2,632.2 1032.1,363.1 1033.6,362.3 1035.4,361.8 1037.3,361.5 1039.2,361.6 1040.9,362 1042.5,362.7 1109,400.7 1109.6,401 1110.3,401.2 1110.9,401.4 1111.7,401.6 1112.4,401.6 1113.2,401.6 1133.8,401.1 1134.7,401.1 1135.7,401.2 1136.6,401.4 1137.5,401.6 1138.3,401.9 1139,402.3 1184.1,427.9 1184.8,428.4 1185.4,428.9 1185.9,429.5 1186.3,430.1 1186.5,430.7 1186.6,431.4 1187.2,443.7 1187.3,444.3 1187.5,444.8 1187.8,445.3 1188.2,445.7 1188.7,446.2 1189.3,446.5 1292.3,505.4 1292.9,505.7 1293.6,506 1294.3,506.2 1295.1,506.3 1295.8,506.4 1296.6,506.4 1319.6,506.1 1320.6,506.1 1321.5,506.3 1322.4,506.4 1323.3,506.7 1324.2,507 1324.9,507.4 1373,534.7 1373.8,535.2 1374.4,535.8 1375,536.4 1375.4,537 1375.7,537.7 1375.9,538.4 1377.5,552.3 1377.6,552.9 1377.8,553.5 1378.2,554 1378.6,554.5 1379.2,555 1379.8,555.4 1458.8,600.2 1460.5,601.5 1461.8,603.1 1462.4,604.7 1462.4,606.4 1461.8,608 1460.5,609.5 1057.6,947.5 1055.5,948.9 1052.9,949.9 1050.1,950.3 1047.4,950.2 1044.7,949.5 1042.5,948.3 743.9,742.3 743.1,741.7 742.5,741.1 742.1,740.4 741.8,739.6 741.6,738.8 741.6,738 743.8,716.3 743.8,715.6 743.6,715 743.4,714.4 743,713.9 742.6,713.4 742,712.9" fill="#33383a"/>
<polygon points="636.1,638.3 634.9,637.2 634.2,635.9 634.1,634.4 634.5,633 635.4,631.6 636.8,630.4 1032.7,361.3 1034.2,360.5 1036,360 1037.9,359.7 1039.8,359.8 1041.5,360.2 1043.1,360.9 1109.6,398.9 1110.2,399.2 1110.9,399.4 1111.5,399.6 1112.3,399.8 1113,399.8 1113.8,399.8 1134.4,399.3 1135.3,399.3 1136.3,399.4 1137.2,399.6 1138.1,399.8 1138.9,400.1 1139.6,400.5 1184.7,426.1 1185.4,426.6 1186,427.1 1186.5,427.7 1186.9,428.3 1187.1,428.9 1187.2,429.6 1187.8,441.9 1187.9,442.5 1188.1,443 1188.4,443.5 1188.8,443.9 1189.3,444.4 1189.9,444.7 1292.9,503.6 1293.5,503.9 1294.2,504.2 1294.9,504.4 1295.7,504.5 1296.4,504.6 1297.2,504.6 1320.2,504.3 1321.2,504.3 1322.1,504.5 1323,504.6 1323.9,504.9 1324.8,505.2 1325.5,505.6 1373.6,532.9 1374.4,533.4 1375,534 1375.6,534.6 1376,535.2 1376.3,535.9 1376.5,536.6 1378.1,550.5 1378.2,551.1 1378.4,551.7 1378.8,552.2 1379.2,552.7 1379.8,553.2 1380.4,553.6 1459.4,598.4 1461.1,599.7 1462.4,601.3 1463,602.9 1463,604.6 1462.4,606.2 1461.1,607.7 1058.2,945.7 1056.1,947.1 1053.5,948.1 1050.7,948.5 1048,948.4 1045.3,947.7 1043.1,946.5 744.5,740.5 743.7,739.9 743.1,739.3 742.7,738.6 742.4,737.8 742.2,737 742.2,736.2 744.4,714.5 744.4,713.8 744.2,713.2 744,712.6 743.6,712.1 743.2,711.6 742.6,711.1" fill="#404647"/>
<line x1="660.4" y1="649.5" x2="1060.1" y2="374.4" stroke="#888e8c" stroke-width="1.2"/>
<line x1="663" y1="617.9" x2="1090.6" y2="906.6" stroke="#888e8c" stroke-width="1.2"/>
<line x1="682.4" y1="664.5" x2="1081.7" y2="386.8" stroke="#888e8c" stroke-width="1.2"/>
<line x1="687.1" y1="601.5" x2="1114.3" y2="886.8" stroke="#888e8c" stroke-width="1.2"/>
<line x1="704.7" y1="679.7" x2="1103.6" y2="399.3" stroke="#888e8c" stroke-width="1.2"/>
<line x1="711" y1="585.2" x2="1137.7" y2="867.2" stroke="#888e8c" stroke-width="1.2"/>
<line x1="727.2" y1="695.1" x2="1125.6" y2="411.9" stroke="#888e8c" stroke-width="1.2"/>
<line x1="734.6" y1="569.1" x2="1160.8" y2="847.9" stroke="#888e8c" stroke-width="1.2"/>
<line x1="749.9" y1="710.6" x2="1147.8" y2="424.6" stroke="#989e9c" stroke-width="1.75"/>
<line x1="758" y1="553.2" x2="1183.5" y2="828.8" stroke="#989e9c" stroke-width="1.75"/>
<line x1="772.8" y1="726.2" x2="1170.3" y2="437.4" stroke="#888e8c" stroke-width="1.2"/>
<line x1="781" y1="537.5" x2="1206.1" y2="810" stroke="#888e8c" stroke-width="1.2"/>
<line x1="795.9" y1="742" x2="1192.9" y2="450.3" stroke="#888e8c" stroke-width="1.2"/>
<line x1="803.8" y1="522" x2="1228.3" y2="791.3" stroke="#888e8c" stroke-width="1.2"/>
<line x1="819.3" y1="758" x2="1215.7" y2="463.4" stroke="#888e8c" stroke-width="1.2"/>
<line x1="826.4" y1="506.6" x2="1250.2" y2="772.9" stroke="#888e8c" stroke-width="1.2"/>
<line x1="842.9" y1="774.1" x2="1238.8" y2="476.6" stroke="#888e8c" stroke-width="1.2"/>
<line x1="848.7" y1="491.5" x2="1271.9" y2="754.8" stroke="#888e8c" stroke-width="1.2"/>
<line x1="866.8" y1="790.4" x2="1262" y2="489.9" stroke="#989e9c" stroke-width="1.75"/>
<line x1="870.7" y1="476.4" x2="1293.4" y2="736.8" stroke="#989e9c" stroke-width="1.75"/>
<line x1="890.9" y1="806.8" x2="1285.5" y2="503.3" stroke="#888e8c" stroke-width="1.2"/>
<line x1="892.5" y1="461.6" x2="1314.5" y2="719.1" stroke="#888e8c" stroke-width="1.2"/>
<line x1="915.2" y1="823.4" x2="1309.1" y2="516.8" stroke="#888e8c" stroke-width="1.2"/>
<line x1="914.1" y1="446.9" x2="1335.4" y2="701.6" stroke="#888e8c" stroke-width="1.2"/>
<line x1="939.8" y1="840.2" x2="1333" y2="530.5" stroke="#888e8c" stroke-width="1.2"/>
<line x1="935.4" y1="432.4" x2="1356.1" y2="684.3" stroke="#888e8c" stroke-width="1.2"/>
<line x1="964.7" y1="857.1" x2="1357.1" y2="544.3" stroke="#888e8c" stroke-width="1.2"/>
<line x1="956.5" y1="418" x2="1376.5" y2="667.2" stroke="#888e8c" stroke-width="1.2"/>
<line x1="989.8" y1="874.3" x2="1381.5" y2="558.2" stroke="#989e9c" stroke-width="1.75"/>
<line x1="977.3" y1="403.8" x2="1396.7" y2="650.3" stroke="#989e9c" stroke-width="1.75"/>
<line x1="1015.1" y1="891.6" x2="1406" y2="572.3" stroke="#888e8c" stroke-width="1.2"/>
<line x1="998" y1="389.8" x2="1416.6" y2="633.6" stroke="#888e8c" stroke-width="1.2"/>
<line x1="1040.7" y1="909.1" x2="1430.8" y2="586.4" stroke="#888e8c" stroke-width="1.2"/>
<line x1="1018.4" y1="375.8" x2="1436.3" y2="617.1" stroke="#888e8c" stroke-width="1.2"/>
<polyline points="1066.6,926.7 652.7,644.3 649.6,641.4 647.7,637.9 647.3,634.2 648.4,630.4 650.8,626.9 654.4,623.7 1027.5,369.6 1030.8,367.9 1034.6,366.8 1038.8,366.3" fill="none" stroke="#989e9c" stroke-width="1.75" stroke-linejoin="round"/>
<polyline points="1038.8,366.3 1043,366.5 1046.9,367.3 1050.4,368.8 1442,592.9 1445.2,595.2 1447.5,598 1448.7,601 1448.6,604.2 1447.4,607.1 1445.1,609.7 1066.6,926.7" fill="none" stroke="#888e8c" stroke-width="1.2"/>
<polygon points="753.6,735.3 753,734.7 752.6,734 752.5,733.3 752.7,732.5 753.1,731.8 753.8,731.2 759.7,726.9 760.6,726.5 761.5,726.1 762.6,726 763.6,726 764.6,726.3 765.4,726.7 962.8,860.9 952,868.7" fill="#d3d7d8"/>
<polygon points="776.9,746.1 782.6,741.9 834,777.4 828.6,781.5" fill="#3aa868"/>
<polygon points="832.7,778.3 834,777.4 890.6,815.8 889.4,816.8" fill="#3aa868"/>
<polygon points="829.8,780.6 831,779.6 882.8,814.8 881.6,815.7" fill="#3aa868"/>
<polygon points="758.5,736.2 766.9,730.1 773.4,734.6 765,740.7" fill="#3c4244"/>
<polygon points="766.4,741.6 774.8,735.5 781.2,740 772.9,746.1" fill="#3c4244"/>
<polygon points="901.3,832.5 913.8,830.3 911.8,839" fill="none" stroke="#9aa0a0" stroke-width="0.7"/>
<polygon points="1005.1,909.7 1014.1,903.1 1027.6,912.9 1027.6,925" fill="#e7e7e7" stroke="#e7e7e7" stroke-width="1" stroke-linejoin="round"/>
<polygon points="1034.8,918 1057.9,933.6 1048.9,940.3 1034.8,930.1" fill="#e7e7e7" stroke="#e7e7e7" stroke-width="1" stroke-linejoin="round"/>
<polygon points="970.9,883.9 977.7,878.4 987.8,885.3 981,890.8" fill="none" stroke="#d8d8d8" stroke-width="1"/>
<polygon points="964.3,877.1 968.2,874 972.5,876.9 968.6,880.1" fill="#cfcfcf"/>
<polygon points="986.8,892.6 990.7,889.4 995.2,892.5 991.3,895.7" fill="#cfcfcf"/>
<text transform="matrix(-2.0287 1.3995 -2.1634 -1.2492 1043.4 391.6)" font-size="4.9" fill="none" font-family="Liberation Sans, sans-serif" font-weight="bold" textLength="85.6" lengthAdjust="spacing" stroke="#c4c8c7" stroke-width="0.28" opacity="0.8">Bambu Textured PEI Plate</text>
<text transform="matrix(2.6134 1.7735 -2.3952 2.0177 1090.9 924.2)" font-size="12.5" fill="#00ae42" font-family="Liberation Sans, sans-serif" font-weight="bold" stroke="#00ae42" stroke-width="0.4">01</text>
<text transform="matrix(2.4618 1.6861 -2.4432 1.9140 920.7 838.9)" font-size="1.6" fill="#6a6f70" font-family="Liberation Sans, sans-serif" font-weight="bold">HOT</text>
<text transform="matrix(2.4623 1.6897 -2.4487 1.9183 916.3 842.4)" font-size="1.6" fill="#6a6f70" font-family="Liberation Sans, sans-serif" font-weight="bold">SURFACE</text>
<polygon points="961.7,596.2 981.7,609.1 981.7,606.5 961.6,593.6" fill="#b85a1c"/>
<polygon points="981.7,609.1 1140.2,494.9 1140.3,492.3 981.7,606.5" fill="#be601d"/>
<polygon points="961.6,593.6 981.7,606.5 1140.3,492.3 1120.4,480.4" fill="url(#hA)" stroke="#d9761f" stroke-width="0.6"/>
<polygon points="987.7,612.9 1017.4,632.1 1017.4,629.5 987.6,610.3" fill="#b85a1c"/>
<polygon points="1017.4,632.1 1175.6,516.1 1175.7,513.5 1017.4,629.5" fill="#be601d"/>
<polygon points="987.6,610.3 1017.4,629.5 1175.7,513.5 1146.2,495.9" fill="url(#hA)" stroke="#d9761f" stroke-width="0.6"/>
<polygon points="981.7,609.1 987.7,612.9 987.6,610.3 981.7,606.5" fill="#b85a1c"/>
<polygon points="987.7,612.9 998.9,604.8 998.9,602.2 987.6,610.3" fill="#be601d"/>
<polygon points="981.7,606.5 987.6,610.3 998.9,602.2 992.9,598.4" fill="url(#hA)"/>
<polygon points="1125.7,505.4 1131.6,509 1131.6,506.4 1125.7,502.8" fill="#b85a1c"/>
<polygon points="1131.6,509 1146.1,498.5 1146.2,495.9 1131.6,506.4" fill="#be601d"/>
<polygon points="1125.7,502.8 1131.6,506.4 1146.2,495.9 1140.3,492.3" fill="url(#hA)"/>
<polygon points="1117.7,484.9 1175,519.3 1175.6,500.4 1118,466" fill="#b85a1c"/>
<polygon points="1175,519.3 1177.7,517.4 1178.3,498.4 1175.6,500.4" fill="#be601d"/>
<polygon points="1118,466 1175.6,500.4 1178.3,498.4 1120.7,464.1" fill="#d8731f"/>
<ellipse cx="1141.8" cy="488.9" rx="1.5" ry="2.6" fill="#dcdcdc" stroke="#7a3a10" stroke-width="0.5" transform="rotate(-30 1141.8 488.9)"/>
<polygon points="978,601 979.8,602.2 979.6,592.9 977.8,591.7" fill="#b85a1c"/>
<polygon points="979.8,602.2 1133.5,491.8 1133.7,482.6 979.6,592.9" fill="#be601d"/>
<polygon points="977.8,591.7 979.6,592.9 1133.7,482.6 1131.9,481.5" fill="#d8731f"/>
<polygon points="996.5,613 998.4,614.1 998.2,604.8 996.4,603.7" fill="#b85a1c"/>
<polygon points="998.4,614.1 1151.9,502.9 1152.1,493.6 998.2,604.8" fill="#be601d"/>
<polygon points="996.4,603.7 998.2,604.8 1152.1,493.6 1150.3,492.5" fill="#d8731f"/>
<polygon points="961.7,596.2 1019.5,633.4 1019.2,614.3 961.1,577.1" fill="#b85a1c"/>
<polygon points="1019.5,633.4 1022.4,631.3 1022.2,612.1 1019.2,614.3" fill="#be601d"/>
<polygon points="961.1,577.1 1019.2,614.3 1022.2,612.1 964.1,575" fill="#d8731f"/>
<ellipse cx="988" cy="604.6" rx="1.7" ry="2.5" fill="#d8402f" stroke="#9a4412" stroke-width="0.6" transform="rotate(-25 988 604.6)"/>
<line x1="1019.5" y1="632.9" x2="1019.4" y2="626.7" stroke="#e9e9e9" stroke-width="1.3"/>
<line x1="1022.9" y1="619.3" x2="1022.8" y2="612.6" stroke="#e4e4e4" stroke-width="1.1"/>
<line x1="1178" y1="505.5" x2="1178.2" y2="499.6" stroke="#e9e9e9" stroke-width="1"/>
<polygon points="1033.1,640.9 1053.7,654.2 1053.7,651.6 1033,638.3" fill="#b85a1c"/>
<polygon points="1053.7,654.2 1211.5,536.5 1211.6,533.9 1053.7,651.6" fill="#be601d"/>
<polygon points="1033,638.3 1053.7,651.6 1211.6,533.9 1191.2,521.6" fill="url(#hA)" stroke="#d9761f" stroke-width="0.6"/>
<polygon points="1059.8,658.2 1090.4,677.9 1090.5,675.2 1059.8,655.5" fill="#b85a1c"/>
<polygon points="1090.4,677.9 1247.9,558.3 1248,555.7 1090.5,675.2" fill="#be601d"/>
<polygon points="1059.8,655.5 1090.5,675.2 1248,555.7 1217.7,537.5" fill="url(#hA)" stroke="#d9761f" stroke-width="0.6"/>
<polygon points="1053.7,654.2 1059.8,658.2 1059.8,655.5 1053.7,651.6" fill="#b85a1c"/>
<polygon points="1059.8,658.2 1071,649.8 1071,647.2 1059.8,655.5" fill="#be601d"/>
<polygon points="1053.7,651.6 1059.8,655.5 1071,647.2 1064.9,643.2" fill="url(#hA)"/>
<polygon points="1197,547.3 1203.1,551 1203.2,548.4 1197.1,544.7" fill="#b85a1c"/>
<polygon points="1203.1,551 1217.6,540.1 1217.7,537.5 1203.2,548.4" fill="#be601d"/>
<polygon points="1197.1,544.7 1203.2,548.4 1217.7,537.5 1211.6,533.9" fill="url(#hA)"/>
<polygon points="1188.4,526.2 1247.4,561.6 1248.3,542.6 1189.1,507.2" fill="#b85a1c"/>
<polygon points="1247.4,561.6 1250,559.6 1251,540.6 1248.3,542.6" fill="#be601d"/>
<polygon points="1189.1,507.2 1248.3,542.6 1251,540.6 1191.8,505.3" fill="#d8731f"/>
<ellipse cx="1213.5" cy="530.6" rx="1.5" ry="2.6" fill="#dcdcdc" stroke="#7a3a10" stroke-width="0.5" transform="rotate(-30 1213.5 530.6)"/>
<polygon points="1049.8,646 1051.7,647.2 1051.6,637.9 1049.8,636.7" fill="#b85a1c"/>
<polygon points="1051.7,647.2 1204.8,533.4 1205.1,524.1 1051.6,637.9" fill="#be601d"/>
<polygon points="1049.8,636.7 1051.6,637.9 1205.1,524.1 1203.3,523" fill="#d8731f"/>
<polygon points="1068.9,658.3 1070.8,659.5 1070.8,650.2 1068.9,648.9" fill="#b85a1c"/>
<polygon points="1070.8,659.5 1223.7,544.7 1224.1,535.5 1070.8,650.2" fill="#be601d"/>
<polygon points="1068.9,648.9 1070.8,650.2 1224.1,535.5 1222.2,534.3" fill="#d8731f"/>
<polygon points="1033.1,640.9 1092.6,679.2 1092.7,660.1 1032.9,621.8" fill="#b85a1c"/>
<polygon points="1092.6,679.2 1095.5,677 1095.7,657.9 1092.7,660.1" fill="#be601d"/>
<polygon points="1032.9,621.8 1092.7,660.1 1095.7,657.9 1035.8,619.7" fill="#d8731f"/>
<ellipse cx="1060.3" cy="649.9" rx="1.7" ry="2.5" fill="#d8402f" stroke="#9a4412" stroke-width="0.6" transform="rotate(-25 1060.3 649.9)"/>
<line x1="1033.1" y1="640.5" x2="1033" y2="634.3" stroke="#e9e9e9" stroke-width="1.3"/>
<line x1="1250.7" y1="547.7" x2="1251" y2="541.8" stroke="#e9e9e9" stroke-width="1"/>
<polygon points="864.8,661 943.4,604 951,607.8 925.7,634.1 1020.5,696.9 1015.1,712 912.2,643.3 872.9,664.8" fill="#be601d"/>
<polygon points="864.8,654 943.4,597 943.4,604 864.8,661" fill="#be601d"/>
<polygon points="943.4,597 951,600.8 951,607.8 943.4,604" fill="#b85a1c"/>
<polygon points="951,600.8 925.7,627.1 925.7,634.1 951,607.8" fill="#be601d"/>
<polygon points="925.7,627.1 1020.5,689.9 1020.5,696.9 925.7,634.1" fill="#b85a1c"/>
<polygon points="1020.5,689.9 1015.1,705 1015.1,712 1020.5,696.9" fill="#be601d"/>
<polygon points="1015.1,705 912.2,636.3 912.2,643.3 1015.1,712" fill="#b85a1c"/>
<polygon points="912.2,636.3 872.9,657.8 872.9,664.8 912.2,643.3" fill="#be601d"/>
<polygon points="872.9,657.8 864.8,654 864.8,661 872.9,664.8" fill="#b85a1c"/>
<polygon points="864.8,654 943.4,597 951,600.8 925.7,627.1 1020.5,689.9 1015.1,705 912.2,636.3 872.9,657.8" fill="url(#hB)" stroke="#d9761f" stroke-width="0.7"/>
<polygon points="929.3,638.7 936.1,627 937.7,636.8 931.2,647.5" fill="#b85a1c" stroke="#d8731f" stroke-width="0.5"/>
<line x1="930.1" y1="641.1" x2="930.3" y2="647.5" stroke="#e4e4e4" stroke-width="1.2"/>
<path d="M940.7 642.2v8.5a3.8 2.2 0 0 0 7.6 0v-8.5z" fill="#be601d"/>
<ellipse cx="944.5" cy="642.2" rx="3.8" ry="2.3" fill="#d8731f"/><ellipse cx="944.5" cy="642.2" rx="2.2" ry="1.2" fill="#c8322f"/>
<polygon points="983.1,675.9 989.4,663.2 991.3,672 985.1,683.7" fill="#b85a1c" stroke="#d8731f" stroke-width="0.5"/>
<line x1="983.9" y1="676.9" x2="984.3" y2="683.7" stroke="#e4e4e4" stroke-width="1.2"/>
<path d="M994.4 677.5v8.5a3.8 2.2 0 0 0 7.6 0v-8.5z" fill="#be601d"/>
<ellipse cx="998.2" cy="677.5" rx="3.8" ry="2.3" fill="#d8731f"/><ellipse cx="998.2" cy="677.5" rx="2.2" ry="1.2" fill="#c8322f"/>
<polygon points="893.9,667.5 913.8,663.5 1013.5,726 1049.6,705.2 1057.6,709.3 979.3,770.6 971,765.8 1000.1,735.1" fill="#be601d"/>
<polygon points="893.9,660.5 913.8,656.5 913.8,663.5 893.9,667.5" fill="#be601d"/>
<polygon points="913.8,656.5 1013.5,719 1013.5,726 913.8,663.5" fill="#b85a1c"/>
<polygon points="1013.5,719 1049.6,698.2 1049.6,705.2 1013.5,726" fill="#be601d"/>
<polygon points="1049.6,698.2 1057.6,702.3 1057.6,709.3 1049.6,705.2" fill="#b85a1c"/>
<polygon points="1057.6,702.3 979.3,763.6 979.3,770.6 1057.6,709.3" fill="#be601d"/>
<polygon points="979.3,763.6 971,758.8 971,765.8 979.3,770.6" fill="#b85a1c"/>
<polygon points="971,758.8 1000.1,728.1 1000.1,735.1 971,765.8" fill="#be601d"/>
<polygon points="1000.1,728.1 893.9,660.5 893.9,667.5 1000.1,735.1" fill="#b85a1c"/>
<polygon points="893.9,660.5 913.8,656.5 1013.5,719 1049.6,698.2 1057.6,702.3 979.3,763.6 971,758.8 1000.1,728.1" fill="url(#hB)" stroke="#d9761f" stroke-width="0.7"/>
<path d="M919.6 663.8v8.5a3.8 2.2 0 0 0 7.6 0v-8.5z" fill="#be601d"/>
<ellipse cx="923.4" cy="663.8" rx="3.8" ry="2.3" fill="#d8731f"/><ellipse cx="923.4" cy="663.8" rx="2.2" ry="1.2" fill="#c8322f"/>
<polygon points="926.7,674.3 945.1,668.5 945.9,676.3 928.3,682.2" fill="#b85a1c" stroke="#d8731f" stroke-width="0.5"/>
<line x1="928.6" y1="673.8" x2="930.1" y2="681.6" stroke="#9c4711" stroke-width="0.7"/>
<line x1="931.5" y1="672.8" x2="932.9" y2="680.6" stroke="#9c4711" stroke-width="0.7"/>
<line x1="934.5" y1="671.9" x2="935.7" y2="679.7" stroke="#9c4711" stroke-width="0.7"/>
<line x1="937.4" y1="670.9" x2="938.5" y2="678.8" stroke="#9c4711" stroke-width="0.7"/>
<line x1="940.3" y1="670" x2="941.3" y2="677.8" stroke="#9c4711" stroke-width="0.7"/>
<line x1="943.3" y1="669.1" x2="944.1" y2="676.9" stroke="#9c4711" stroke-width="0.7"/>
<path d="M974.4 698.4v8.5a3.8 2.2 0 0 0 7.6 0v-8.5z" fill="#be601d"/>
<ellipse cx="978.2" cy="698.4" rx="3.8" ry="2.3" fill="#d8731f"/><ellipse cx="978.2" cy="698.4" rx="2.2" ry="1.2" fill="#c8322f"/>
<line x1="981.5" y1="699.8" x2="981.9" y2="707.2" stroke="#e4e4e4" stroke-width="1.1"/>
<polygon points="983.1,709.6 1001.1,703.3 1002.3,710.7 985.1,717" fill="#b85a1c" stroke="#d8731f" stroke-width="0.5"/>
<line x1="984.9" y1="708.9" x2="986.8" y2="716.4" stroke="#9c4711" stroke-width="0.7"/>
<line x1="987.8" y1="707.9" x2="989.5" y2="715.4" stroke="#9c4711" stroke-width="0.7"/>
<line x1="990.7" y1="706.9" x2="992.3" y2="714.4" stroke="#9c4711" stroke-width="0.7"/>
<line x1="993.5" y1="705.9" x2="995" y2="713.4" stroke="#9c4711" stroke-width="0.7"/>
<line x1="996.4" y1="704.9" x2="997.8" y2="712.4" stroke="#9c4711" stroke-width="0.7"/>
<line x1="999.3" y1="703.9" x2="1000.6" y2="711.4" stroke="#9c4711" stroke-width="0.7"/>
<polygon points="640.1,635.3 685.1,604.7 687,607.5 695.4,595.8 681.4,599.3 683.3,602.1 638.3,632.7" fill="#00b400"/>
<polygon points="638.3,635.3 677,662 675.1,664.8 689,668.4 680.7,656.6 678.8,659.4 640.1,632.7" fill="#e00000"/>
<polygon points="640.8,633.8 634.9,592.1 638.2,591.7 631.4,579 628.3,593.1 631.7,592.6 637.6,634.2" fill="#0000a8"/>
</svg><div class="abs" style="left:1324px;top:60px;width:459px;height:547.500px;background:rgba(30,30,30,0.815)"></div>
<div class="abs" style="left:1324px;top:61px;width:459px;height:29.500px;background:rgba(20,20,20,0.45)"></div>
<div class="t" style="left:1336px;top:69.7px;font-size:12.5px;color:#fff;font-weight:bold;letter-spacing:-0.08px">Slicing Result</div>
<svg class="abs" style="left:1764px;top:68px" width="16" height="14" viewBox="0 0 16 14" fill="none" stroke="#fff" stroke-width="1.200"><path d="M2.500 7l5.500-4.500l5.500 4.500M2.500 11.500l5.500-4.500l5.500 4.500"/></svg>
<div class="t" style="left:1336px;top:97.2px;font-size:12.5px;color:#fff;font-weight:bold;letter-spacing:-0.07px">Color Scheme</div>
<div class="abs" style="left:1428px;top:95px;width:198px;height:20.500px;border-radius:4px;background:rgba(25,25,25,0.6)"></div>
<svg class="abs" style="left:1433px;top:101px" width="12" height="10" viewBox="0 0 12 10" fill="none" stroke="#fff" stroke-width="1.100"><path d="M2 3l4 3.500l4-3.500"/></svg>
<div class="t" style="left:1453px;top:99.7px;font-size:12.5px;color:#fff;letter-spacing:0.34px">Line Type</div>
<div class="t" style="left:1336px;top:121.7px;font-size:12.5px;color:#fff;font-weight:bold;letter-spacing:0.20px">Line Type</div>
<div class="t" style="left:1462px;top:121.7px;font-size:12.5px;color:#fff;font-weight:bold">Time</div>
<div class="t" style="left:1517px;top:121.7px;font-size:12.5px;color:#fff;font-weight:bold;letter-spacing:0.21px">Percent</div>
<div class="t" style="left:1578px;top:121.7px;font-size:12.5px;color:#fff;font-weight:bold;letter-spacing:0.17px">Used filament</div>
<div class="t" style="left:1706px;top:121.7px;font-size:12.5px;color:#fff;font-weight:bold;letter-spacing:0.08px">Display</div>
<div class="abs" style="left:1324px;top:139px;width:459px;height:1px;background:#bdbdbd"></div>
<div class="abs" style="left:1337px;top:146.2px;width:9px;height:9px;background:#ffe64d"></div>
<div class="t" style="left:1354px;top:144.8px;font-size:12.5px;color:#fff;letter-spacing:0.24px">Inner wall</div>
<div class="t" style="left:1462px;top:144.8px;font-size:12.5px;color:#fff;letter-spacing:0.04px">2m10s</div>
<div class="t" style="left:1517px;top:144.8px;font-size:12.5px;color:#fff;letter-spacing:0.04px">6.7%</div>
<div class="t" style="left:1578px;top:144.8px;font-size:12.5px;color:#fff;letter-spacing:0.04px">0.41 m</div>
<div class="t" style="left:1630px;top:144.8px;font-size:12.5px;color:#fff;letter-spacing:0.04px">1.29 g</div>
<div class="abs" style="left:1710.500px;top:143.2px;width:15px;height:15px;background:#555"></div>
<svg class="abs" style="left:1710.500px;top:143.2px" width="15" height="15" viewBox="0 0 15 15" fill="none" stroke="#00b946" stroke-width="2"><path d="M2.800 7.700l3.300 3.300l6.300-6.600"/></svg>
<div class="abs" style="left:1337px;top:167.2px;width:9px;height:9px;background:#ff7d38"></div>
<div class="t" style="left:1354px;top:165.8px;font-size:12.5px;color:#fff;letter-spacing:0.25px">Outer wall</div>
<div class="t" style="left:1462px;top:165.8px;font-size:12.5px;color:#fff;letter-spacing:0.04px">4m46s</div>
<div class="t" style="left:1517px;top:165.8px;font-size:12.5px;color:#fff;letter-spacing:0.04px">14.6%</div>
<div class="t" style="left:1578px;top:165.8px;font-size:12.5px;color:#fff;letter-spacing:0.04px">0.91 m</div>
<div class="t" style="left:1630px;top:165.8px;font-size:12.5px;color:#fff;letter-spacing:0.04px">2.88 g</div>
<div class="abs" style="left:1710.500px;top:164.2px;width:15px;height:15px;background:#555"></div>
<svg class="abs" style="left:1710.500px;top:164.2px" width="15" height="15" viewBox="0 0 15 15" fill="none" stroke="#00b946" stroke-width="2"><path d="M2.800 7.700l3.300 3.300l6.300-6.600"/></svg>
<div class="abs" style="left:1337px;top:188.2px;width:9px;height:9px;background:#1f1fff"></div>
<div class="t" style="left:1354px;top:186.8px;font-size:12.5px;color:#fff;letter-spacing:0.25px">Overhang wall</div>
<div class="t" style="left:1462px;top:186.8px;font-size:12.5px;color:#fff;letter-spacing:0.04px">&lt;1s</div>
<div class="t" style="left:1517px;top:186.8px;font-size:12.5px;color:#fff;letter-spacing:0.04px">&lt;0.1%</div>
<div class="t" style="left:1578px;top:186.8px;font-size:12.5px;color:#fff;letter-spacing:0.04px">0.00 m</div>
<div class="t" style="left:1630px;top:186.8px;font-size:12.5px;color:#fff;letter-spacing:0.04px">0.00 g</div>
<div class="abs" style="left:1710.500px;top:185.2px;width:15px;height:15px;background:#555"></div>
<svg class="abs" style="left:1710.500px;top:185.2px" width="15" height="15" viewBox="0 0 15 15" fill="none" stroke="#00b946" stroke-width="2"><path d="M2.800 7.700l3.300 3.300l6.300-6.600"/></svg>
<div class="abs" style="left:1337px;top:209.2px;width:9px;height:9px;background:#b03029"></div>
<div class="t" style="left:1354px;top:207.8px;font-size:12.5px;color:#fff;letter-spacing:0.25px">Sparse infill</div>
<div class="t" style="left:1462px;top:207.8px;font-size:12.5px;color:#fff;letter-spacing:0.04px">35s</div>
<div class="t" style="left:1517px;top:207.8px;font-size:12.5px;color:#fff;letter-spacing:0.04px">1.8%</div>
<div class="t" style="left:1578px;top:207.8px;font-size:12.5px;color:#fff;letter-spacing:0.04px">0.08 m</div>
<div class="t" style="left:1630px;top:207.8px;font-size:12.5px;color:#fff;letter-spacing:0.04px">0.26 g</div>
<div class="abs" style="left:1710.500px;top:206.2px;width:15px;height:15px;background:#555"></div>
<svg class="abs" style="left:1710.500px;top:206.2px" width="15" height="15" viewBox="0 0 15 15" fill="none" stroke="#00b946" stroke-width="2"><path d="M2.800 7.700l3.300 3.300l6.300-6.600"/></svg>
<div class="abs" style="left:1337px;top:230.2px;width:9px;height:9px;background:#9654cc"></div>
<div class="t" style="left:1354px;top:228.8px;font-size:12.5px;color:#fff;letter-spacing:0.31px">Internal solid infill</div>
<div class="t" style="left:1462px;top:228.8px;font-size:12.5px;color:#fff;letter-spacing:0.04px">7m54s</div>
<div class="t" style="left:1517px;top:228.8px;font-size:12.5px;color:#fff;letter-spacing:0.04px">24.3%</div>
<div class="t" style="left:1578px;top:228.8px;font-size:12.5px;color:#fff;letter-spacing:0.04px">1.55 m</div>
<div class="t" style="left:1630px;top:228.8px;font-size:12.5px;color:#fff;letter-spacing:0.04px">4.92 g</div>
<div class="abs" style="left:1710.500px;top:227.2px;width:15px;height:15px;background:#555"></div>
<svg class="abs" style="left:1710.500px;top:227.2px" width="15" height="15" viewBox="0 0 15 15" fill="none" stroke="#00b946" stroke-width="2"><path d="M2.800 7.700l3.300 3.300l6.300-6.600"/></svg>
<div class="abs" style="left:1337px;top:251.2px;width:9px;height:9px;background:#f03033"></div>
<div class="t" style="left:1354px;top:249.8px;font-size:12.5px;color:#fff;letter-spacing:0.25px">Top surface</div>
<div class="t" style="left:1462px;top:249.8px;font-size:12.5px;color:#fff;letter-spacing:0.04px">2m29s</div>
<div class="t" style="left:1517px;top:249.8px;font-size:12.5px;color:#fff;letter-spacing:0.04px">7.6%</div>
<div class="t" style="left:1578px;top:249.8px;font-size:12.5px;color:#fff;letter-spacing:0.04px">0.31 m</div>
<div class="t" style="left:1630px;top:249.8px;font-size:12.5px;color:#fff;letter-spacing:0.04px">1.00 g</div>
<div class="abs" style="left:1710.500px;top:248.2px;width:15px;height:15px;background:#555"></div>
<svg class="abs" style="left:1710.500px;top:248.2px" width="15" height="15" viewBox="0 0 15 15" fill="none" stroke="#00b946" stroke-width="2"><path d="M2.800 7.700l3.300 3.300l6.300-6.600"/></svg>
<div class="abs" style="left:1337px;top:272.2px;width:9px;height:9px;background:#6666cc"></div>
<div class="t" style="left:1354px;top:270.8px;font-size:12.5px;color:#fff;letter-spacing:0.25px">Bottom surface</div>
<div class="t" style="left:1462px;top:270.8px;font-size:12.5px;color:#fff;letter-spacing:0.04px">3m20s</div>
<div class="t" style="left:1517px;top:270.8px;font-size:12.5px;color:#fff;letter-spacing:0.04px">10.3%</div>
<div class="t" style="left:1578px;top:270.8px;font-size:12.5px;color:#fff;letter-spacing:0.04px">0.26 m</div>
<div class="t" style="left:1630px;top:270.8px;font-size:12.5px;color:#fff;letter-spacing:0.04px">0.83 g</div>
<div class="abs" style="left:1710.500px;top:269.2px;width:15px;height:15px;background:#555"></div>
<svg class="abs" style="left:1710.500px;top:269.2px" width="15" height="15" viewBox="0 0 15 15" fill="none" stroke="#00b946" stroke-width="2"><path d="M2.800 7.700l3.300 3.300l6.300-6.600"/></svg>
<div class="abs" style="left:1337px;top:293.2px;width:9px;height:9px;background:#4d80ba"></div>
<div class="t" style="left:1354px;top:291.8px;font-size:12.5px;color:#fff;letter-spacing:0.25px">Bridge</div>
<div class="t" style="left:1462px;top:291.8px;font-size:12.5px;color:#fff;letter-spacing:0.04px">28s</div>
<div class="t" style="left:1517px;top:291.8px;font-size:12.5px;color:#fff;letter-spacing:0.04px">1.5%</div>
<div class="t" style="left:1578px;top:291.8px;font-size:12.5px;color:#fff;letter-spacing:0.04px">0.07 m</div>
<div class="t" style="left:1630px;top:291.8px;font-size:12.5px;color:#fff;letter-spacing:0.04px">0.21 g</div>
<div class="abs" style="left:1710.500px;top:290.2px;width:15px;height:15px;background:#555"></div>
<svg class="abs" style="left:1710.500px;top:290.2px" width="15" height="15" viewBox="0 0 15 15" fill="none" stroke="#00b946" stroke-width="2"><path d="M2.800 7.700l3.300 3.300l6.300-6.600"/></svg>
<div class="abs" style="left:1337px;top:314.2px;width:9px;height:9px;background:#ffffff"></div>
<div class="t" style="left:1354px;top:312.8px;font-size:12.5px;color:#fff;letter-spacing:0.25px">Gap infill</div>
<div class="t" style="left:1462px;top:312.8px;font-size:12.5px;color:#fff;letter-spacing:0.04px">1m23s</div>
<div class="t" style="left:1517px;top:312.8px;font-size:12.5px;color:#fff;letter-spacing:0.04px">4.3%</div>
<div class="t" style="left:1578px;top:312.8px;font-size:12.5px;color:#fff;letter-spacing:0.04px">0.30 m</div>
<div class="t" style="left:1630px;top:312.8px;font-size:12.5px;color:#fff;letter-spacing:0.04px">0.94 g</div>
<div class="abs" style="left:1710.500px;top:311.2px;width:15px;height:15px;background:#555"></div>
<svg class="abs" style="left:1710.500px;top:311.2px" width="15" height="15" viewBox="0 0 15 15" fill="none" stroke="#00b946" stroke-width="2"><path d="M2.800 7.700l3.300 3.300l6.300-6.600"/></svg>
<div class="abs" style="left:1337px;top:335.2px;width:9px;height:9px;background:#5ed194"></div>
<div class="t" style="left:1354px;top:333.8px;font-size:12.5px;color:#fff;letter-spacing:0.25px">Custom</div>
<div class="t" style="left:1462px;top:333.8px;font-size:12.5px;color:#fff;letter-spacing:0.04px">5m55s</div>
<div class="t" style="left:1517px;top:333.8px;font-size:12.5px;color:#fff;letter-spacing:0.04px">18.2%</div>
<div class="t" style="left:1578px;top:333.8px;font-size:12.5px;color:#fff;letter-spacing:0.04px">0.02 m</div>
<div class="t" style="left:1630px;top:333.8px;font-size:12.5px;color:#fff;letter-spacing:0.04px">0.08 g</div>
<div class="abs" style="left:1710.500px;top:332.2px;width:15px;height:15px;background:#555"></div>
<svg class="abs" style="left:1710.500px;top:332.2px" width="15" height="15" viewBox="0 0 15 15" fill="none" stroke="#00b946" stroke-width="2"><path d="M2.800 7.700l3.300 3.300l6.300-6.600"/></svg>
<div class="abs" style="left:1337px;top:356.2px;width:9px;height:9px;background:#38489b"></div>
<div class="t" style="left:1354px;top:354.8px;font-size:12.5px;color:#fff;letter-spacing:0.25px">Travel</div>
<div class="t" style="left:1462px;top:354.8px;font-size:12.5px;color:#fff;letter-spacing:0.04px">3m21s</div>
<div class="t" style="left:1517px;top:354.8px;font-size:12.5px;color:#fff;letter-spacing:0.04px">10.3%</div>
<div class="abs" style="left:1710.500px;top:353.2px;width:15px;height:15px;background:#555"></div>
<div class="abs" style="left:1337px;top:377.2px;width:9px;height:9px;background:#d12fd1"></div>
<div class="t" style="left:1354px;top:375.8px;font-size:12.5px;color:#fff;letter-spacing:0.25px">Retract</div>
<div class="abs" style="left:1710.500px;top:374.2px;width:15px;height:15px;background:#555"></div>
<div class="abs" style="left:1337px;top:398.2px;width:9px;height:9px;background:#43a8c8"></div>
<div class="t" style="left:1354px;top:396.8px;font-size:12.5px;color:#fff;letter-spacing:0.25px">Unretract</div>
<div class="abs" style="left:1710.500px;top:395.2px;width:15px;height:15px;background:#555"></div>
<div class="abs" style="left:1337px;top:419.2px;width:9px;height:9px;background:#ffff00"></div>
<div class="t" style="left:1354px;top:417.8px;font-size:12.5px;color:#fff;letter-spacing:0.25px">Wipe</div>
<div class="abs" style="left:1710.500px;top:416.2px;width:15px;height:15px;background:#555"></div>
<div class="abs" style="left:1337px;top:440.2px;width:9px;height:9px;background:#e6e6e6"></div>
<div class="t" style="left:1354px;top:438.8px;font-size:12.5px;color:#fff;letter-spacing:0.25px">Seams</div>
<div class="abs" style="left:1710.500px;top:437.2px;width:15px;height:15px;background:#555"></div>
<svg class="abs" style="left:1710.500px;top:437.2px" width="15" height="15" viewBox="0 0 15 15" fill="none" stroke="#00b946" stroke-width="2"><path d="M2.800 7.700l3.300 3.300l6.300-6.600"/></svg>
<div class="t" style="left:1336px;top:469.1px;font-size:12.5px;color:#fff;font-weight:bold;letter-spacing:0.22px">Total Estimation</div>
<div class="abs" style="left:1324px;top:486px;width:459px;height:1px;background:#bdbdbd"></div>
<div class="t" style="left:1336px;top:491.4px;font-size:12.5px;color:#fff;letter-spacing:0.25px">Total Filament:</div>
<div class="t" style="left:1505px;top:491.4px;font-size:12.5px;color:#fff;letter-spacing:0.04px">3.91 m</div>
<div class="t" style="left:1560.5px;top:491.4px;font-size:12.5px;color:#fff;letter-spacing:0.04px">12.40 g</div>
<div class="t" style="left:1336px;top:510.4px;font-size:12.5px;color:#fff;letter-spacing:0.25px">Model Filament:</div>
<div class="t" style="left:1505px;top:510.4px;font-size:12.5px;color:#fff;letter-spacing:0.04px">3.91 m</div>
<div class="t" style="left:1560.5px;top:510.4px;font-size:12.5px;color:#fff;letter-spacing:0.04px">12.40 g</div>
<div class="t" style="left:1336px;top:529.4px;font-size:12.5px;color:#fff;letter-spacing:0.25px">Cost:</div>
<div class="t" style="left:1505px;top:529.4px;font-size:12.5px;color:#fff;letter-spacing:0.04px">0.37</div>
<div class="t" style="left:1336px;top:548.4px;font-size:12.5px;color:#fff;letter-spacing:0.26px">Prepare and timelapse time:</div>
<div class="t" style="left:1505px;top:548.4px;font-size:12.5px;color:#fff;letter-spacing:0.05px">6m4s + 27s</div>
<div class="t" style="left:1336px;top:567.4px;font-size:12.5px;color:#fff;letter-spacing:0.25px">Model printing time:</div>
<div class="t" style="left:1505px;top:567.4px;font-size:12.5px;color:#fff;letter-spacing:0.04px">26m4s</div>
<div class="t" style="left:1336px;top:586.4px;font-size:12.5px;color:#fff;letter-spacing:0.25px">Total time:</div>
<div class="t" style="left:1505px;top:586.4px;font-size:12.5px;color:#fff;letter-spacing:0.04px">32m36s</div>
</div>
</body>
</html>
